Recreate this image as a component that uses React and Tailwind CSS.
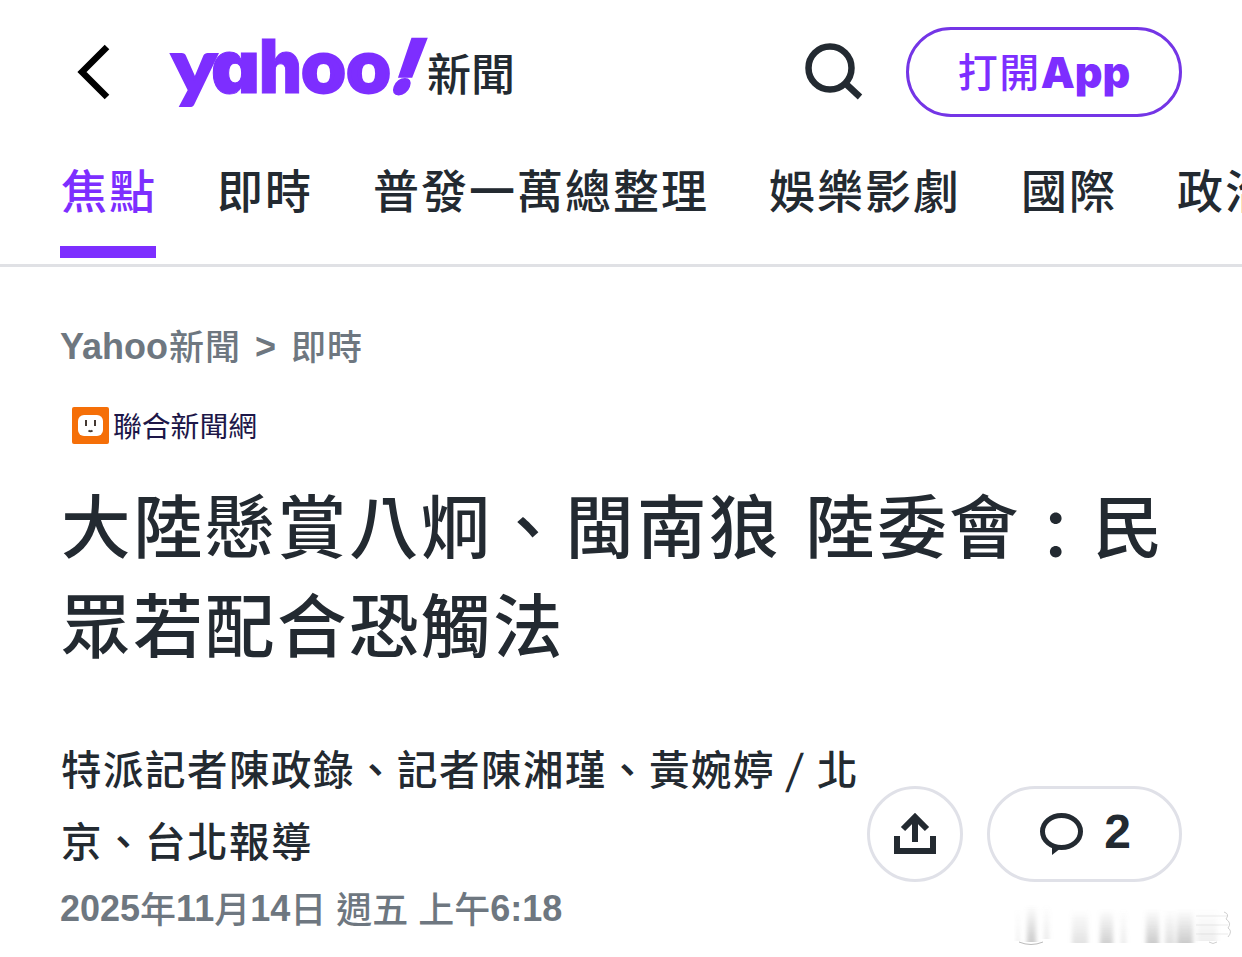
import clsx from "clsx";

const TABS = ["焦點", "即時", "普發一萬總整理", "娛樂影劇", "國際", "政治"];

const YahooLogo = () => (
  <svg
    width="262"
    height="80"
    viewBox="0 0 262 80"
    className="shrink-0 overflow-visible fill-[#7d2eff] stroke-[#7d2eff] font-['Inter',sans-serif] text-[74px] leading-none font-black [font-feature-settings:'cv11']"
    strokeWidth="0"
  >
    <text x="3" y="61" textLength="46" lengthAdjust="spacingAndGlyphs" strokeWidth="2" className="font-['Lato',sans-serif] text-[77px]">y</text>
    <text x="43" y="61" textLength="49" lengthAdjust="spacingAndGlyphs" strokeWidth="1">a</text>
    <text x="91" y="61" textLength="43" lengthAdjust="spacingAndGlyphs" strokeWidth="1">h</text>
    <text x="134" y="60" textLength="43" lengthAdjust="spacingAndGlyphs" strokeWidth="4" className="font-['Lato',sans-serif] text-[72px]">o</text>
    <text x="179" y="60" textLength="43" lengthAdjust="spacingAndGlyphs" strokeWidth="4" className="font-['Lato',sans-serif] text-[72px]">o</text>
    <text transform="translate(219 61) skewX(-20)" textLength="25" lengthAdjust="spacingAndGlyphs" strokeWidth="3">!</text>
  </svg>
);

const Header = () => (
  <header className="flex h-[144px] items-center pl-[76px] pr-[60px]">
    <button type="button" aria-label="返回">
      <svg width="36" height="60" viewBox="0 0 36 60" fill="none" stroke="#000" strokeWidth="6.500">
        <path d="M31 5 6 30 31 55" />
      </svg>
    </button>
    <div className="ml-[56px] flex items-center">
      <YahooLogo />
      <span className="-ml-[3px] text-[44px] leading-none font-medium">新聞</span>
    </div>
    <button type="button" aria-label="搜尋" className="ml-auto mr-[42px]">
      <svg width="60" height="60" viewBox="0 0 60 60" fill="none" stroke="#232a31" strokeWidth="6.500">
        <circle cx="26" cy="26" r="21.500" />
        <path d="M41 41 56 55" />
      </svg>
    </button>
    <button
      type="button"
      className="flex h-[90px] w-[276px] items-center justify-center rounded-full border-[3px] border-[#7435e6] text-[40px] font-medium tracking-[1.500px] text-[#7d2eff]"
    >
      <span className="pb-[5px]">打開</span>
      <span className="font-['Inter',sans-serif] text-[43px] font-black tracking-normal">App</span>
    </button>
  </header>
);

const Nav = () => (
  <nav className="flex h-[123px] gap-[60px] overflow-hidden border-b-[3px] border-[#e0e1e5] pl-[60px]">
    {TABS.map((tab, i) => (
      <a
        key={tab}
        className={clsx(
          "mb-[6px] shrink-0 border-b-12 pt-[9px] pl-px text-[46px] leading-[70px] font-medium tracking-[2px] whitespace-nowrap",
          tab.length === 2 && "w-[96px]",
          tab.length === 4 && "w-[192px]",
          tab.length === 7 && "w-[336px]",
          i === 0 ? "border-[#7d2eff] text-[#7d2eff]" : "border-transparent"
        )}
      >
        {tab}
      </a>
    ))}
  </nav>
);

const Provider = () => (
  <div className="mt-[27px] flex h-[50px] items-center pl-[12px]">
    <svg width="37" height="37" viewBox="0 0 37 37">
      <rect width="37" height="37" rx="2" fill="#f56f08" />
      <rect x="6" y="8" width="25" height="21" rx="6" fill="#fff" />
      <path d="M14 13v6M23 13v6" stroke="#433832" strokeWidth="2" />
      <path d="M16.500 23.500q2 1.500 4 0" stroke="#433832" strokeWidth="2" fill="none" />
    </svg>
    <span className="ml-[4px] text-[28.800px] leading-none text-[#1d1748]">聯合新聞網</span>
  </div>
);

const Actions = () => (
  <div className="mt-[54px] flex gap-[24px]">
    <button
      type="button"
      aria-label="分享"
      className="flex size-[96px] items-center justify-center rounded-full border-[3px] border-[#e0e1e8]"
    >
      <svg width="42" height="42" viewBox="0 0 42 42" fill="none" stroke="#232a31" strokeWidth="6">
        <path d="M3 23v15h36V23" />
        <path d="M21 29V4M9 16 21 4l12 12" />
      </svg>
    </button>
    <button
      type="button"
      className="flex h-[96px] w-[195px] items-center justify-center gap-[21px] rounded-full border-[3px] border-[#e0e1e8] pl-[2px]"
    >
      <svg width="43" height="42" viewBox="0 0 43 42">
        <ellipse cx="21.500" cy="18.500" rx="19" ry="16" fill="none" stroke="#232a31" strokeWidth="5" />
        <path d="M12 31v11l9-7z" fill="#232a31" />
      </svg>
      <span className="pb-[4px] font-['Liberation_Sans',sans-serif] text-[48px] leading-none font-bold">2</span>
    </button>
  </div>
);

// faded watermark in the lower right corner
const Watermark = () => (
  <svg width="228" height="48" viewBox="0 0 228 48" className="absolute right-0 bottom-[4px]">
    <defs>
      <linearGradient id="fade" x1="0" y1="0" x2="0" y2="1">
        <stop offset="0" stopColor="#999" stopOpacity="0" />
        <stop offset="1" stopColor="#999" stopOpacity="0.500" />
      </linearGradient>
      <filter id="soft" x="-20%" y="-20%" width="140%" height="140%">
        <feGaussianBlur stdDeviation="2 0.600" />
      </filter>
    </defs>
    <g fill="url(#fade)" filter="url(#soft)">
      <rect x="13" y="0" width="9" height="37" />
      <rect x="3" y="4" width="2" height="32" opacity="0.500" />
      <rect x="30" y="0" width="5" height="34" opacity="0.400" />
      <rect x="58" y="4" width="16" height="34" opacity="0.550" />
      <rect x="86" y="4" width="13" height="34" opacity="0.900" />
      <rect x="107" y="4" width="5" height="34" opacity="0.400" />
      <rect x="132" y="4" width="13" height="34" />
      <rect x="151" y="4" width="10" height="34" opacity="0.600" />
      <rect x="163" y="4" width="16" height="34" />
      <rect x="183" y="4" width="20" height="32" opacity="0.300" />
    </g>
    <g fill="none" stroke="#bbb" strokeWidth="1">
      <path d="M5 37q12 5 24 0" />
      <path d="M182 11h32M182 20h32M182 29h32" opacity="0.300" />
      <path d="M210 7q6 2 2 7 6 4 2 9 5 3 0 9M195 37q4 3 8 0" opacity="0.700" />
    </g>
  </svg>
);

const App = () => {
  return (
    <div
      lang="zh-Hant"
      className="relative h-[957px] w-[1242px] overflow-hidden bg-white font-['Noto_Sans_CJK_TC',sans-serif] text-[#232a31]"
    >
      <Header />
      <Nav />

      <main className="px-[60px] pt-[54px]">
        <div className="flex h-[52px] items-center text-[36px] leading-none text-[#6e7780]">
          <span className="font-['Liberation_Sans',sans-serif] font-bold">Yahoo</span>
          <span className="pb-[5px] pl-px text-[35px] font-medium tracking-[1px]">新聞</span>
          <span className="mr-[15px] ml-[14px] font-['Liberation_Sans',sans-serif] font-bold">&gt;</span>
          <span className="pb-[5px] text-[35px] font-medium tracking-[1px]">即時</span>
        </div>

        <Provider />

        <h1 className="mt-[23px] pl-px text-[69.500px] leading-[99px] font-medium tracking-[2.500px] whitespace-nowrap">
          大陸懸賞八炯、閩南狼<span className="inline-block w-[24px]"> </span>陸委會
          <span className="relative top-[8px]">：</span>民
          <br />
          眾若配合恐觸法
        </h1>

        <div className="mt-[61px] flex justify-between">
          <div className="whitespace-nowrap">
            <p className="pl-px text-[40.500px] leading-[72px] font-medium tracking-[1.500px]">
              特派記者陳政錄、記者陳湘瑾、黃婉婷
              <span className="inline-block w-[42px] -skew-x-6 text-center">/</span>北
              <br />
              京、台北報導
            </p>
            <p className="flex h-[66px] items-center text-[36px] leading-none font-medium text-[#6e7780]">
              <span className="font-['Liberation_Sans',sans-serif] font-bold">2025</span>
              <span className="pb-[5px]">年</span>
              <span className="font-['Liberation_Sans',sans-serif] font-bold">11</span>
              <span className="pb-[5px]">月</span>
              <span className="font-['Liberation_Sans',sans-serif] font-bold">14</span>
              <span className="pb-[5px]">日</span>
              <span className="mx-[10px] pb-[5px]">週五</span>
              <span className="pb-[5px]">上午</span>
              <span className="font-['Liberation_Sans',sans-serif] font-bold">6:18</span>
            </p>
          </div>
          <Actions />
        </div>
      </main>

      <Watermark />
    </div>
  );
};

export default App;
